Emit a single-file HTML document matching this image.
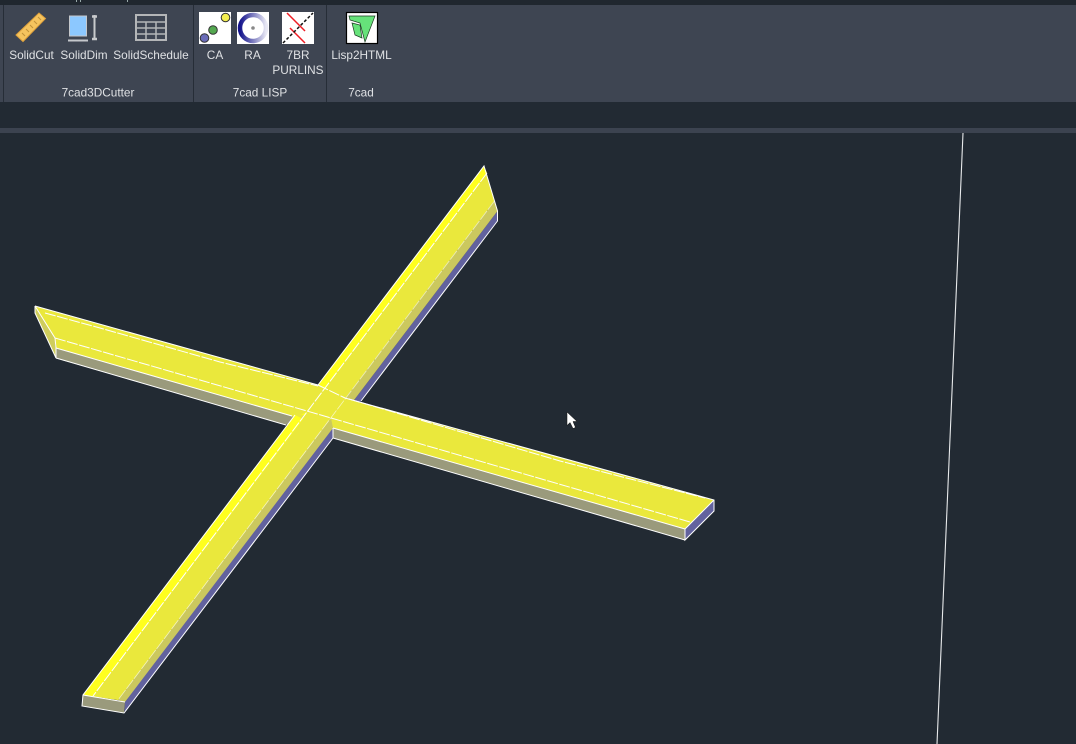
<!DOCTYPE html>
<html><head><meta charset="utf-8"><style>
html,body{margin:0;padding:0;background:#222a33;width:1076px;height:744px;overflow:hidden}
svg{display:block;position:absolute;left:0;top:0}
text{font-family:"Liberation Sans",sans-serif;font-size:11.8px;fill:#dfe1e4;text-anchor:middle}
</style></head><body>
<svg width="1076" height="744" viewBox="0 0 1076 744" xmlns="http://www.w3.org/2000/svg">
<defs><linearGradient id="g" x1="0" y1="0" x2="1" y2="0"><stop offset="0" stop-color="#14148c"/><stop offset="1" stop-color="#e8e8f4"/></linearGradient></defs>
<rect width="1076" height="744" fill="#222a33"/>
<rect width="1076" height="5" fill="#20272f"/>
<rect x="76" y="0" width="1" height="2" fill="#9aa"/><rect x="80" y="0" width="1" height="2" fill="#9aa"/><rect x="127" y="0" width="1" height="2" fill="#9aa"/>
<rect y="5" width="1076" height="97" fill="#3e4552"/>
<rect y="128" width="1076" height="5" fill="#3c4350"/>
<rect x="3" y="5" width="1" height="97" fill="#262d37"/>
<rect x="193" y="5" width="1" height="97" fill="#262d37"/>
<rect x="326" y="5" width="1" height="97" fill="#262d37"/>
<!-- ruler -->
<path d="M16 35L39 13L45.500 18.500L23 41.500Z" fill="#f5c45e" stroke="#dfa13c" stroke-width="1"/>
<path d="M22 33l3 3M26 29l3 3M30 25l3 3M34 21l3 3M38 17l3 3" stroke="#c09238" stroke-width="1"/>
<!-- soliddim -->
<rect x="69.500" y="16" width="17" height="20" fill="#8cc8ff" stroke="#c5c8cc"/>
<rect x="68" y="39.500" width="20" height="2" fill="#c5c8cc"/>
<path d="M94.500 15v25" stroke="#c8cacc" stroke-width="2" fill="none"/>
<path d="M92 16.500h5M92 39h5" stroke="#c8cacc" stroke-width="2.500" fill="none"/>
<!-- schedule -->
<path d="M136 15h30v25h-30z" fill="none" stroke="#b4b6b8" stroke-width="2"/>
<path d="M136 22h30M136 28h30M136 34h30M146 22v18M156 22v18" fill="none" stroke="#b4b6b8" stroke-width="1.500"/>
<!-- CA -->
<rect x="199" y="12" width="32" height="32" fill="#fff"/>
<circle cx="225.500" cy="17.500" r="4.300" fill="#f4ee50" stroke="#333" stroke-width="1"/>
<circle cx="213" cy="30" r="4.300" fill="#54a850" stroke="#333" stroke-width="1"/>
<circle cx="204.500" cy="38" r="4.300" fill="#6a6cb8" stroke="#333" stroke-width="1"/>
<!-- RA -->
<rect x="237" y="12" width="32" height="32" fill="#fff"/>
<circle cx="253" cy="28" r="13" fill="none" stroke="url(#g)" stroke-width="4.500"/>
<circle cx="253" cy="28" r="1.800" fill="#888"/>
<!-- 7BR -->
<rect x="282" y="12" width="32" height="32" fill="#fff"/>
<path d="M287 13L305 31M290 28L305 43" stroke="#ee1c24" stroke-width="1.500"/>
<path d="M283 43L313 13" stroke="#111" stroke-width="1.500" stroke-dasharray="3 2"/>
<!-- Lisp -->
<rect x="346.500" y="12.500" width="31" height="31" fill="#fff" stroke="#000" stroke-width="1.200"/>
<path d="M349 16H375L365 42L360 23L350 20Z" fill="#66e27a" stroke="#1c3a22" stroke-width=".7"/>
<path d="M352 23L360 25L362 38L355 35Z" fill="#66e27a" stroke="#1c3a22" stroke-width=".7"/>
<!-- labels -->
<text x="31.500" y="59">SolidCut</text>
<text x="84" y="59">SolidDim</text>
<text x="151" y="59">SolidSchedule</text>
<text x="215" y="59">CA</text>
<text x="252.500" y="59">RA</text>
<text x="298" y="59">7BR</text>
<text x="298" y="74">PURLINS</text>
<text x="361.500" y="59">Lisp2HTML</text>
<text x="98" y="96.500">7cad3DCutter</text>
<text x="260" y="96.500">7cad LISP</text>
<text x="361" y="96.500">7cad</text>
<!-- axis line -->
<path d="M963 133L937 744" stroke="#e8eaec" stroke-width="1.100" fill="none"/>
<!-- Beam A upper -->
<path d="M497.500 211L497.500 221L124.500 713L125 702Z" fill="#62629e"/>
<path d="M494.500 201L497.500 211L125 702L118 700Z" fill="#cbc85e"/>
<path d="M484 166L494.500 201L118 700L83 695Z" fill="#eae83c"/>
<path d="M484 166L487 173L93 696L83 695Z" fill="#ffff1e"/>
<!-- Beam B -->
<path d="M56 348L333 428L333 438L56 358.500Z" fill="#9a9a7c"/>
<path d="M333 428L685 529L685 540L333 438Z" fill="#9a9a7c"/>
<path d="M714 500L714 511L685 540L685 529Z" fill="#62629e"/>
<path d="M35 306L55 338L56 358L35 313Z" fill="#cfcd5c"/>
<path d="M35 306L318 385L345 398L714 500L685 529L333 428L330 417L307 412L295 417.200L56 348L55 338Z" fill="#eae83c"/>
<!-- lower A over B -->
<path d="M295 414L331 418L333 428L318 440L118 700L93 696Z" fill="#eae83c"/>
<path d="M295 415L303 419L93 696L83 695Z" fill="#ffff1e"/>
<path d="M331 418L333 428L333 438L125 702L118 700Z" fill="#cbc85e"/>
<path d="M333 428L333 438L124.500 713L125 702Z" fill="#62629e"/>
<path d="M82.500 695L125 702L124 713L82 706Z" fill="#9a9a7c"/>
<!-- outlines -->
<g fill="none" stroke="#fff" stroke-width="1">
<path d="M318 385L484 166L494.500 201L497.500 211V221L361 401"/>
<path d="M295 415L83 695L82 706L124 713L333 438V428"/>
<path d="M83 695L125 702"/>
<path d="M35 306L318 385M345 398L714 500V511L685 540V529L714 500"/>
<path d="M35 306V313L56 358V348M55 338L56 348M35 306L55 338"/>
<path d="M56 358L286 425M56 348L292 416M333 428L685 529M333 438L685 540"/>
</g>
<g fill="none" stroke="#fff" stroke-width="1" stroke-dasharray="11 1.500">
<path d="M45 313L100 328L220 362L318 386"/>
<path d="M349 399L560 461L705 498"/>
<path d="M55 338L690 522"/>
<path d="M487 173L93 696"/>
<path d="M494.500 201L118 700" stroke-width=".8" stroke-opacity=".65"/>
<path d="M318 385L345 398"/>
</g>
<!-- cursor -->
<path d="M567 412V425.500L570 422.500L573 428.500L575.500 427.500L573 421.500H577Z" fill="#fff" stroke="#111" stroke-width=".5"/>
</svg>
</body></html>
